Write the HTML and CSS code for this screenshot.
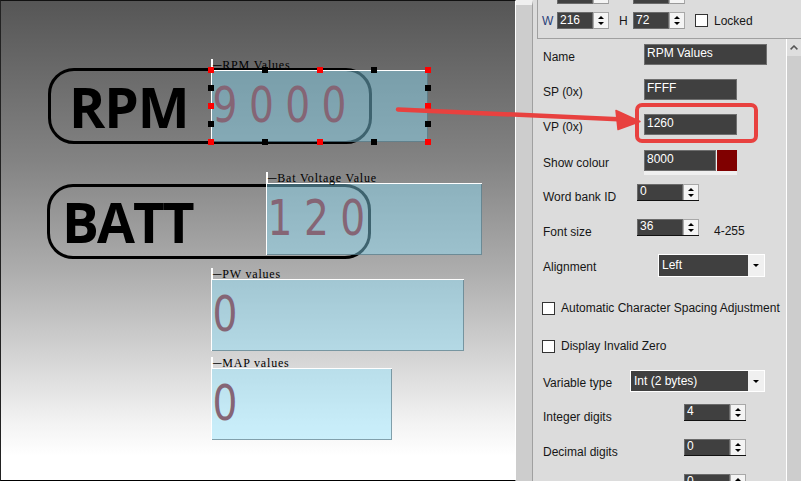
FILE: index.html
```html
<!DOCTYPE html>
<html>
<head>
<meta charset="utf-8">
<title>Editor</title>
<link rel="stylesheet" href="styles.css">
</head>
<body>
<div class="app">
  <div class="canvas">
    <div class="pill pill-rpm"><span class="pill-text">RPM</span></div>
    <div class="pill pill-batt"><span class="pill-text pill-text-batt">BATT</span></div>

    <div class="numbox box-rpm">
      <span class="cap">─RPM Values</span>
      <span class="digits">9000</span>
      <div class="handles">
        <i class="hd red x0 y0"></i><i class="hd blk x25 y0"></i><i class="hd red x50 y0"></i><i class="hd blk x75 y0"></i><i class="hd red x100 y0"></i>
        <i class="hd red x0 y100"></i><i class="hd blk x25 y100"></i><i class="hd red x50 y100"></i><i class="hd blk x75 y100"></i><i class="hd red x100 y100"></i>
        <i class="hd blk x0 y25"></i><i class="hd red x0 y50"></i><i class="hd blk x0 y75"></i>
        <i class="hd blk x100 y25"></i><i class="hd red x100 y50"></i><i class="hd blk x100 y75"></i>
      </div>
    </div>
    <div class="numbox box-batt">
      <span class="cap">─Bat Voltage Value</span>
      <span class="digits">120</span>
    </div>
    <div class="numbox box-pw">
      <span class="cap">─PW values</span>
      <span class="digits">0</span>
    </div>
    <div class="numbox box-map">
      <span class="cap">─MAP values</span>
      <span class="digits">0</span>
    </div>
  </div>

  <div class="gutter"></div>

  <div class="panel">
    <div class="group">
      <div class="grow grow-cut">
        <span class="glabel"></span>
        <div class="spinwrap gspin"><div class="ginput"></div><div class="spin"><i class="up"></i><i class="dn"></i></div></div>
        <span class="glabel glabel-h"></span>
        <div class="spinwrap gspin"><div class="ginput"></div><div class="spin"><i class="up"></i><i class="dn"></i></div></div>
      </div>
      <div class="grow">
        <span class="glabel glabel-w">W</span>
        <div class="spinwrap gspin"><div class="ginput">216</div><div class="spin"><i class="up"></i><i class="dn"></i></div></div>
        <span class="glabel glabel-h">H</span>
        <div class="spinwrap gspin"><div class="ginput">72</div><div class="spin"><i class="up"></i><i class="dn"></i></div></div>
        <span class="cb cb-locked"></span>
        <span class="glabel-locked">Locked</span>
      </div>
    </div>

    <div class="scroll">
      <div class="content">
        <div class="row h35">
          <span class="lbl l101">Name</span>
          <div class="tbox w123">RPM Values</div>
        </div>
        <div class="row h35">
          <span class="lbl l101">SP (0x)</span>
          <div class="tbox w93">FFFF</div>
        </div>
        <div class="row h36">
          <span class="lbl l101">VP (0x)</span>
          <div class="tbox w93">1260</div>
        </div>
        <div class="row h34">
          <span class="lbl l101">Show colour</span>
          <div class="colour"><div class="tbox w72">8000</div><div class="swatch"></div></div>
        </div>
        <div class="row h35">
          <span class="lbl l94">Word bank ID</span>
          <div class="spinwrap"><div class="sinput">0</div><div class="spin"><i class="up"></i><i class="dn"></i></div></div>
        </div>
        <div class="row h35">
          <span class="lbl l94">Font size</span>
          <div class="spinwrap"><div class="sinput">36</div><div class="spin"><i class="up"></i><i class="dn"></i></div></div>
          <span class="lbl range">4-255</span>
        </div>
        <div class="row h42">
          <span class="lbl l115">Alignment</span>
          <div class="select w107"><span class="val">Left</span><span class="drop"><i class="dn"></i></span></div>
        </div>
        <div class="row h38">
          <span class="cb cb-row"></span>
          <span class="clbl">Automatic Character Spacing Adjustment</span>
        </div>
        <div class="row h36">
          <span class="cb cb-row"></span>
          <span class="clbl">Display Invalid Zero</span>
        </div>
        <div class="row h34">
          <span class="lbl l87">Variable type</span>
          <div class="select w135 sel22"><span class="val">Int (2 bytes)</span><span class="drop"><i class="dn"></i></span></div>
        </div>
        <div class="row h35">
          <span class="lbl l141">Integer digits</span>
          <div class="spinwrap"><div class="sinput">4</div><div class="spin"><i class="up"></i><i class="dn"></i></div></div>
        </div>
        <div class="row h35">
          <span class="lbl l141">Decimal digits</span>
          <div class="spinwrap"><div class="sinput">0</div><div class="spin"><i class="up"></i><i class="dn"></i></div></div>
        </div>
        <div class="row h35">
          <span class="lbl l141"></span>
          <div class="spinwrap"><div class="sinput">0</div><div class="spin"><i class="up"></i><i class="dn"></i></div></div>
        </div>
      </div>
      <div class="sbar">
        <div class="sbtn"><svg width="8" height="5" viewBox="0 0 8 5"><polyline points="0.6,4.4 4,1 7.4,4.4" fill="none" stroke="#555" stroke-width="1.5"/></svg></div>
      </div>
    </div>
  </div>
</div>

<svg class="annot" width="801" height="481" viewBox="0 0 801 481">
  <line x1="398" y1="109.5" x2="624" y2="119.4" stroke="#e8413f" stroke-width="4.5" stroke-linecap="round"/>
  <polygon points="616,110.5 640,121.5 618,129.5" fill="#e8413f" stroke="#e8413f" stroke-width="1.5" stroke-linejoin="round"/>
  <rect x="637" y="105" width="119" height="36" rx="5" ry="5" fill="none" stroke="#e8413f" stroke-width="4"/>
</svg>
</body>
</html>
```

FILE: styles.css
```css
* { box-sizing: border-box; }
html, body { margin: 0; padding: 0; }
body {
  width: 801px;
  height: 481px;
  overflow: hidden;
  position: relative;
  font-family: "Liberation Sans", Arial, sans-serif;
  font-size: 12px;
  color: #161616;
  background: #dcdcdc;
}
.app { display: flex; width: 801px; height: 481px; }

/* ---------- design canvas ---------- */
.canvas {
  position: relative;
  flex: none;
  width: 516px;
  height: 481px;
  border-top: 1px solid #111;
  border-left: 1px solid #222;
  border-bottom: 1px solid #000;
  border-right: 1px solid #fff;
  background: linear-gradient(to bottom, #565656 0, #838383 160px, #adadad 270px, #d6d6d6 360px, #f2f2f2 420px, #ffffff 455px);
  overflow: hidden;
}
.pill {
  position: absolute;
  display: flex;
  align-items: center;
  border: 3px solid #000;
  border-radius: 26px;
}
.pill-rpm { left: 47px; top: 67px; width: 324px; height: 76px; padding-left: 18px; }
.pill-batt { left: 46px; top: 183px; width: 324px; height: 75px; padding-left: 12px; }
.pill-text {
  font-family: "Open Sans", "Liberation Sans", sans-serif;
  font-weight: 700;
  font-size: 55px;
  line-height: 1;
  letter-spacing: -1px;
  color: #000;
}
.pill-text-batt { letter-spacing: -2px; }

.numbox {
  position: absolute;
  height: 72px;
  background: rgba(143, 228, 255, 0.435);
  box-shadow: inset 1px 1px 0 #fff, inset -1px -1px 0 rgba(70, 95, 105, 0.55);
}
.box-rpm { left: 210px; top: 69px; width: 217px; }
.box-batt { left: 265px; top: 182px; width: 216px; }
.box-pw { left: 210px; top: 278px; width: 253px; }
.box-map { left: 210px; top: 367px; width: 181px; }

.cap {
  position: absolute;
  left: 0;
  bottom: 100%;
  margin-bottom: -1px;
  line-height: 12px;
  border-left: 2px solid #fff;
  font-family: "Liberation Serif", "DejaVu Serif", serif;
  font-size: 12px;
  letter-spacing: 0.8px;
  color: #000;
  white-space: nowrap;
}
.digits {
  display: inline-block;
  padding: 11px 0 0 2px;
  font-family: "DejaVu Sans", sans-serif;
  font-size: 49px;
  line-height: 49px;
  letter-spacing: 14.2px;
  color: #856575;
  white-space: nowrap;
  transform: scaleX(0.8);
  transform-origin: 0 0;
}

.handles { position: absolute; inset: 0; }
.hd { position: absolute; width: 6px; height: 6px; transform: translate(-50%, -50%); }
.red { background: #ff0000; }
.blk { background: #000; }
.x0 { left: 0; } .x25 { left: 25%; } .x50 { left: 50%; } .x75 { left: 75%; } .x100 { left: 100%; }
.y0 { top: 0; } .y25 { top: 25%; } .y50 { top: 50%; } .y75 { top: 75%; } .y100 { top: 100%; }

/* ---------- gutter ---------- */
.gutter {
  flex: none;
  width: 17px;
  height: 481px;
  background: #cdcdcd;
  border-top: 5px solid #efefef;
  border-right: 1px solid #a0a0a0;
}

/* ---------- property panel ---------- */
.panel {
  flex: none;
  width: 268px;
  height: 481px;
  display: flex;
  flex-direction: column;
  background: #dcdcdc;
  overflow: hidden;
}
.group {
  flex: none;
  height: 39px;
  margin-left: 4px;
  padding-left: 4px;
  border-left: 1px solid #a0a0a0;
  border-bottom: 1px solid #a0a0a0;
}
.grow { display: flex; align-items: center; height: 17px; }
.grow-cut { margin-top: -13px; }
.grow + .grow { margin-top: 8px; }
.glabel { width: 15px; line-height: 14px; flex: none; }
.glabel-w { color: #2a3f7a; }
.glabel-h { width: 14px; margin-left: 10px; }
.glabel-locked { margin-left: 6px; line-height: 14px; }
.ginput {
  width: 36px;
  height: 17px;
  background: #404040;
  border: 1px solid #6a6a6a;
  color: #fff;
  padding: 1px 0 0 2px;
  line-height: 13px;
}
.gspin { border-bottom: none; height: 17px; }
.gspin .spin { height: 17px; border-bottom: 1px solid #9a9a9a; }

.cb {
  flex: none;
  display: block;
  width: 13px;
  height: 13px;
  background: #fff;
  border: 1px solid #333;
}
.cb-locked { margin-left: 10px; }
.cb-row { margin-top: 6px; margin-left: -1px; }
.clbl { margin-left: 6px; padding-top: 5px; line-height: 14px; white-space: nowrap; }

.scroll { flex: 1; display: flex; min-height: 0; }
.content {
  flex: none;
  width: 254px;
  border-right: 1px solid #fff;
  padding: 5px 0 0 10px;
  overflow: hidden;
}
.sbar {
  flex: none;
  width: 14px;
  background: #cdcdcd;
  display: flex;
  flex-direction: column;
}
.sbtn {
  height: 17px;
  background: #dedede;
  display: flex;
  align-items: center;
  justify-content: center;
}

.row { display: flex; align-items: flex-start; flex: none; }
.h34 { height: 34px; } .h35 { height: 35px; } .h36 { height: 36px; } .h38 { height: 38px; } .h42 { height: 42px; }
.lbl { flex: none; padding-top: 6px; line-height: 14px; white-space: nowrap; }
.l101 { width: 101px; } .l94 { width: 94px; } .l115 { width: 115px; } .l87 { width: 87px; } .l141 { width: 141px; }
.range { margin-left: 15px; padding-top: 5px; }

.tbox {
  height: 21px;
  background: #404040;
  border: 1px solid #6e6e6e;
  color: #fff;
  padding: 2px 0 0 2px;
  line-height: 12px;
  white-space: nowrap;
}
.w123 { width: 123px; } .w93 { width: 93px; } .w72 { width: 72px; }

.colour {
  display: flex;
  align-items: flex-start;
  width: 93px;
  height: 25px;
  background: #f0f0f0;
}
.swatch { width: 20px; height: 21px; margin-left: 1px; background: #800000; }

.spinwrap { display: flex; height: 17px; border-bottom: 1px solid #111; }
.sinput {
  width: 46px;
  height: 16px;
  background: #404040;
  border: 1px solid #6a6a6a;
  border-bottom: none;
  color: #fff;
  padding: 0 0 0 2px;
  line-height: 13px;
}
.spin {
  width: 16px;
  height: 16px;
  background: #f4f4f4;
  border: 1px solid #a8a8a8;
  border-bottom: none;
  display: flex;
  flex-direction: column;
  align-items: center;
  justify-content: space-evenly;
}
.up, .dn { display: block; width: 0; height: 0; border-left: 3px solid transparent; border-right: 3px solid transparent; }
.up { border-bottom: 3px solid #000; }
.dn { border-top: 3px solid #000; }

.select {
  display: flex;
  height: 23px;
  border: 1px solid #fff;
  background: #404040;
  color: #fff;
}
.sel22 { height: 22px; }
.w107 { width: 107px; } .w135 { width: 135px; }
.select .val { flex: 1; padding-left: 3px; line-height: 20px; white-space: nowrap; }
.select .drop {
  width: 16px;
  background: #f0f0f0;
  display: flex;
  align-items: center;
  justify-content: center;
}

/* ---------- annotation overlay ---------- */
.annot { position: absolute; left: 0; top: 0; pointer-events: none; }
```
